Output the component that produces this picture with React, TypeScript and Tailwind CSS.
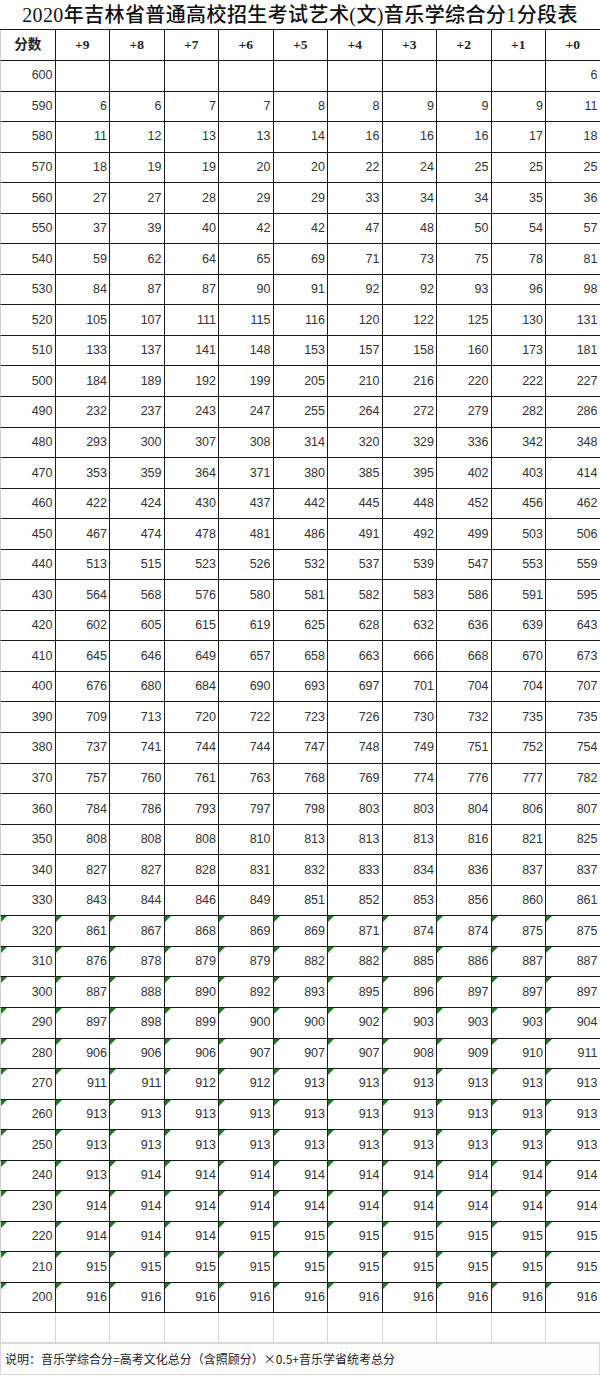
import React from "react";

const raw = `600|,,,,,,,,,6
590|6,6,7,7,8,8,9,9,9,11
580|11,12,13,13,14,16,16,16,17,18
570|18,19,19,20,20,22,24,25,25,25
560|27,27,28,29,29,33,34,34,35,36
550|37,39,40,42,42,47,48,50,54,57
540|59,62,64,65,69,71,73,75,78,81
530|84,87,87,90,91,92,92,93,96,98
520|105,107,111,115,116,120,122,125,130,131
510|133,137,141,148,153,157,158,160,173,181
500|184,189,192,199,205,210,216,220,222,227
490|232,237,243,247,255,264,272,279,282,286
480|293,300,307,308,314,320,329,336,342,348
470|353,359,364,371,380,385,395,402,403,414
460|422,424,430,437,442,445,448,452,456,462
450|467,474,478,481,486,491,492,499,503,506
440|513,515,523,526,532,537,539,547,553,559
430|564,568,576,580,581,582,583,586,591,595
420|602,605,615,619,625,628,632,636,639,643
410|645,646,649,657,658,663,666,668,670,673
400|676,680,684,690,693,697,701,704,704,707
390|709,713,720,722,723,726,730,732,735,735
380|737,741,744,744,747,748,749,751,752,754
370|757,760,761,763,768,769,774,776,777,782
360|784,786,793,797,798,803,803,804,806,807
350|808,808,808,810,813,813,813,816,821,825
340|827,827,828,831,832,833,834,836,837,837
330|843,844,846,849,851,852,853,856,860,861
320|861,867,868,869,869,871,874,874,875,875
310|876,878,879,879,882,882,885,886,887,887
300|887,888,890,892,893,895,896,897,897,897
290|897,898,899,900,900,902,903,903,903,904
280|906,906,906,907,907,907,908,909,910,911
270|911,911,912,912,913,913,913,913,913,913
260|913,913,913,913,913,913,913,913,913,913
250|913,913,913,913,913,913,913,913,913,913
240|913,914,914,914,914,914,914,914,914,914
230|914,914,914,914,914,914,914,914,914,914
220|914,914,914,915,915,915,915,915,915,915
210|915,915,915,915,915,915,915,915,915,915
200|916,916,916,916,916,916,916,916,916,916`;

const rows = raw.split("\n").map((line) => {
  const [score, vals] = line.split("|");
  return { score: Number(score), cells: [score, ...vals.split(",")] };
});

const headers = ["分数", "+9", "+8", "+7", "+6", "+5", "+4", "+3", "+2", "+1", "+0"];

function Flag() {
  // little green "number stored as text" marker
  return (
    <svg className="absolute left-0 top-0" width="6" height="6" viewBox="0 0 6 6">
      <polygon points="0,0 6,0 0,6" fill="#1f7a1f" />
    </svg>
  );
}

export default function App() {
  return (
    <div className="w-[600px] h-[1376px] bg-white text-[#222] overflow-hidden">
      <div className="h-[30px] border-b border-[#1a1a1a] flex items-center justify-center font-medium text-[20px] tracking-[0.4px] leading-none font-['Liberation_Serif','Noto_Sans_CJK_SC',serif] text-[#111]">
        2020年吉林省普通高校招生考试艺术(文)音乐学综合分1分段表
      </div>

      <div className="grid grid-cols-[repeat(11,54.5px)] h-[31px] border-b border-[#1a1a1a] border-l border-l-[#d0d0d0]">
        {headers.map((h) => (
          <div
            key={h}
            className="border-r border-[#1a1a1a] flex items-center justify-center font-bold text-[13.5px] font-['Liberation_Serif','Noto_Sans_CJK_SC',serif]"
          >
            {h}
          </div>
        ))}
      </div>

      {rows.map((r) => (
        <div
          key={r.score}
          className="grid grid-cols-[repeat(11,54.5px)] h-[30.56px] border-b border-[#1a1a1a] border-l border-l-[#d0d0d0]"
        >
          {r.cells.map((c, i) => (
            <div
              key={i}
              className="relative border-r border-[#1a1a1a] flex items-center justify-end pr-[2px] text-[12.5px] text-[#333] font-['Liberation_Sans',sans-serif]"
            >
              {r.score <= 320 && <Flag />}
              {c}
            </div>
          ))}
        </div>
      ))}

      <div className="grid grid-cols-[repeat(11,54.5px)] h-[30px] border-b border-[#d8d8d8] border-l border-l-[#d0d0d0]">
        {headers.map((h) => (
          <div key={h} className="border-r border-[#d8d8d8]" />
        ))}
      </div>

      <div className="h-[32px] border border-[#d8d8d8] bg-[#fdfdfd] flex items-center pl-[4px] text-[12px] font-['Noto_Sans_CJK_SC',sans-serif] text-[#222]">
        说明：音乐学综合分=高考文化总分（含照顾分）×0.5+音乐学省统考总分
      </div>
    </div>
  );
}
